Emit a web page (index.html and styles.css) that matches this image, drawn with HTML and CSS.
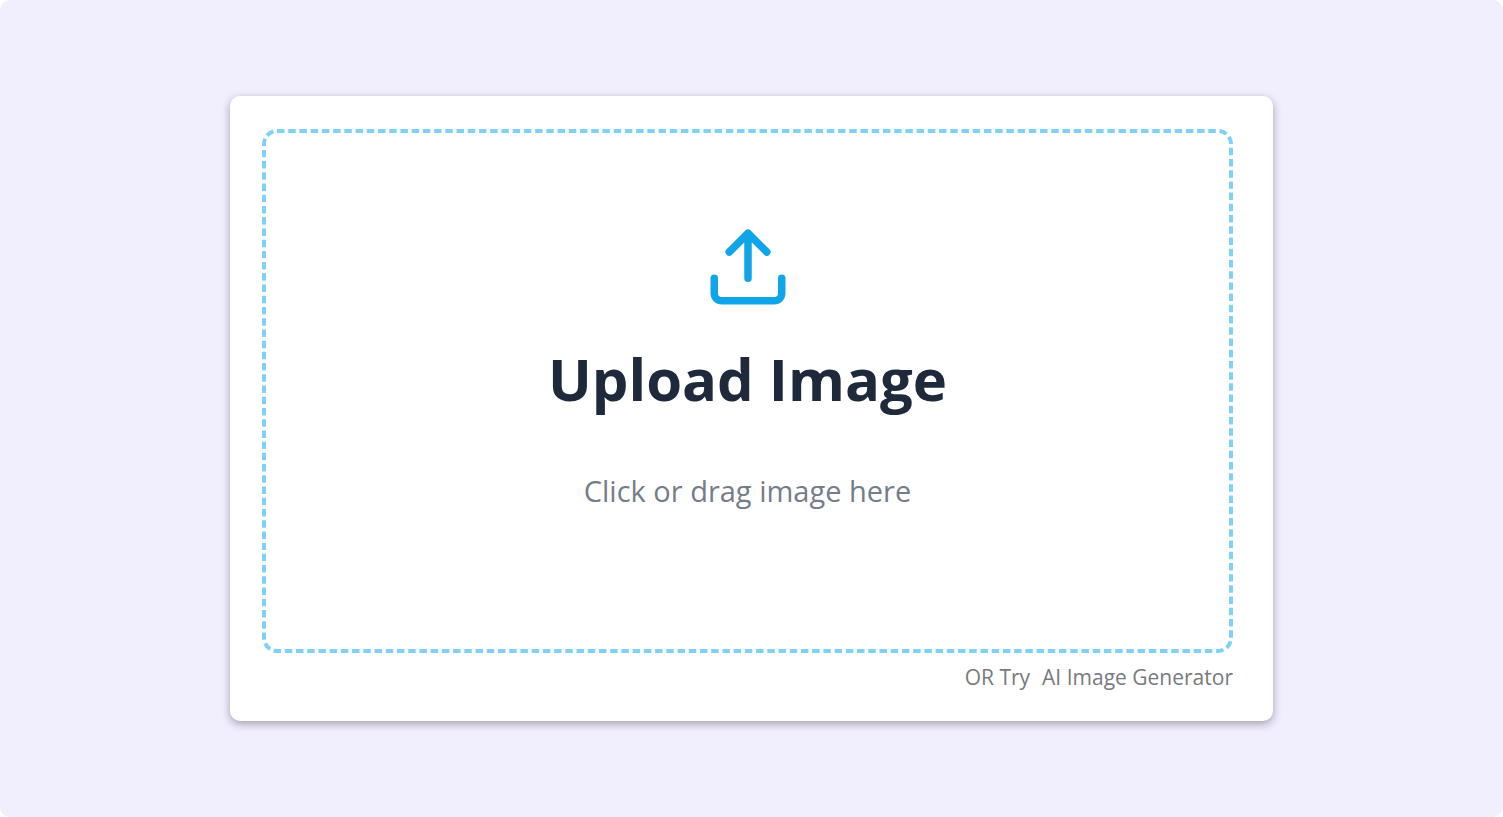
FILE: index.html
```html
<!DOCTYPE html>
<html lang="en">
<head>
<meta charset="utf-8">
<meta name="viewport" content="width=device-width, initial-scale=1">
<title>Upload Image</title>
<link rel="stylesheet" href="styles.css">
</head>
<body>
<main class="stage">
  <section class="card">
    <button class="dropzone" type="button">
      <svg class="outline" aria-hidden="true">
        <rect class="outline-rect" x="2" y="2" rx="13" pathLength="789"/>
      </svg>
      <svg class="icon" viewBox="0 0 24 24" fill="none" stroke="currentColor" stroke-width="2" stroke-linecap="round" stroke-linejoin="round" aria-hidden="true">
        <path d="M3 15v4a2 2 0 0 0 2 2h14a2 2 0 0 0 2-2v-4M7 8l5-5 5 5M12 3v12"/>
      </svg>
      <span class="title">Upload Image</span>
      <span class="hint">Click or drag image here</span>
    </button>
    <p class="alt"><span>OR Try</span><a class="alt-link" href="#">AI Image Generator</a></p>
  </section>
</main>
</body>
</html>
```
FILE: styles.css
```css
* {
  box-sizing: border-box;
}

body {
  margin: 0;
  background: #fff;
  font-family: "Open Sans", "Noto Sans", sans-serif;
}

.stage {
  min-height: 100vh;
  padding: 96px 230px;
  display: flex;
  flex-direction: column;
  background: #f1eefd;
  border-radius: 10px;
}

.card {
  flex: 1;
  display: flex;
  flex-direction: column;
  padding: 33px 40px 28px 32px;
  background: #fff;
  border-radius: 10px;
  box-shadow: 0 3px 8px rgba(30, 20, 50, 0.36);
}

.dropzone {
  position: relative;
  flex: 1;
  display: flex;
  flex-direction: column;
  align-items: center;
  padding: 93px 28px 28px;
  border: 0;
  border-radius: 16px;
  background: #fff;
  font-family: inherit;
  cursor: pointer;
}

/* Dashed frame laid over the drop area */
.outline {
  position: absolute;
  inset: 0;
  width: 100%;
  height: 100%;
}

.outline-rect {
  width: calc(100% - 4px);
  height: calc(100% - 4px);
  fill: none;
  stroke: #7fd2f7;
  stroke-width: 4px;
  stroke-dasharray: 2 1;
}

.icon {
  width: 90px;
  height: 90px;
  color: #10a5e9;
}

.title {
  margin-top: 27px;
  font-size: 58px;
  line-height: 80px;
  font-weight: 700;
  color: #1e293b;
}

.hint {
  margin-top: 52px;
  font-size: 29px;
  line-height: 40px;
  color: #757d89;
}

.alt {
  display: flex;
  justify-content: flex-end;
  gap: 12px;
  margin: 8px 0 0;
  font-size: 21px;
  line-height: 32px;
  color: #777a80;
}

.alt-link {
  color: inherit;
  text-decoration: none;
}
```
